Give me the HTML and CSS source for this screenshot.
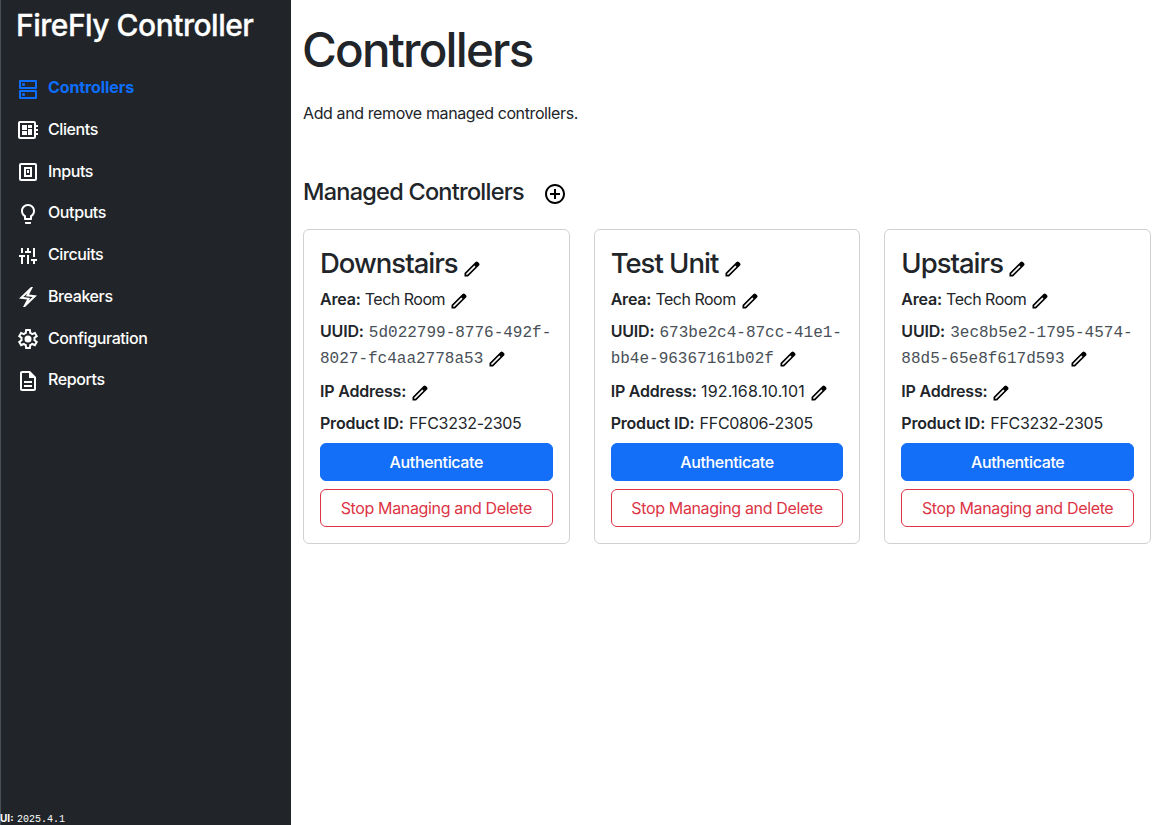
FILE: index.html
```html
<!DOCTYPE html>
<html lang="en">
<head>
<meta charset="utf-8">
<title>FireFly Controller</title>
<link rel="stylesheet" href="styles.css">
</head>
<body>
<svg class="sprite" aria-hidden="true">
  <symbol id="edit" viewBox="0 -960 960 960"><path d="M200-200h57l391-391-57-57-391 391v57Zm-80 80v-170l528-527q12-11 26.500-17t30.500-6q16 0 31 6t26 18l55 56q12 11 17.500 26t5.500 30q0 16-5.500 30.500T817-647L290-120H120Z"/></symbol>
</svg>
<div class="app">
  <aside class="sidebar">
    <div class="brand">FireFly Controller</div>
    <nav class="nav">
      <a class="nav-item active"><svg class="icon" viewBox="0 0 24 24"><path fill-rule="evenodd" d="M4 3h16a1 1 0 0 1 1 1v7a1 1 0 0 1-1 1H4a1 1 0 0 1-1-1V4a1 1 0 0 1 1-1zm1 2v5h14V5zM4 13h16a1 1 0 0 1 1 1v7a1 1 0 0 1-1 1H4a1 1 0 0 1-1-1v-7a1 1 0 0 1 1-1zm1 2v5h14v-5z"/><circle cx="7.500" cy="7.500" r="1.600"/><circle cx="7.500" cy="17.500" r="1.600"/></svg><span>Controllers</span></a>
      <a class="nav-item"><svg class="icon" viewBox="0 0 24 24"><path d="M22 9V7h-2V5c0-1.100-.9-2-2-2H4c-1.100 0-2 .9-2 2v14c0 1.100.9 2 2 2h14c1.100 0 2-.9 2-2v-2h2v-2h-2v-2h2v-2h-2V9h2zm-4 10H4V5h14v14zM6 13h5v4H6zm6-6h4v3h-4zM6 7h5v5H6zm6 4h4v6h-4z"/></svg><span>Clients</span></a>
      <a class="nav-item"><svg class="icon" viewBox="0 0 24 24"><path fill-rule="evenodd" d="M5 3h14a2 2 0 0 1 2 2v14a2 2 0 0 1-2 2H5a2 2 0 0 1-2-2V5a2 2 0 0 1 2-2zm0 2v14h14V5zM8 7h8v10H8zm2 2v6h4V9zM11 10h2v3h-2z"/></svg><span>Inputs</span></a>
      <a class="nav-item"><svg class="icon" viewBox="0 0 24 24"><path d="M9 21c0 .55.45 1 1 1h4c.55 0 1-.45 1-1v-1H9v1zm3-19C8.140 2 5 5.140 5 9c0 2.380 1.190 4.470 3 5.740V17c0 .55.45 1 1 1h6c.55 0 1-.45 1-1v-2.260c1.810-1.270 3-3.360 3-5.740 0-3.860-3.140-7-7-7zm2.850 11.100l-.85.6V16h-4v-2.300l-.85-.6C7.800 12.160 7 10.630 7 9c0-2.760 2.240-5 5-5s5 2.240 5 5c0 1.630-.8 3.160-2.150 4.100z"/></svg><span>Outputs</span></a>
      <a class="nav-item"><svg class="icon" viewBox="0 0 24 24"><path d="M5 20v-7H3v-2h6v2H7v7zm0-11V4h2v5zm4 0V7h2V4h2v3h2v2zm2 11v-9h2v9zm6 0v-3h-2v-2h6v2h-2v3zm0-7V4h2v9z"/></svg><span>Circuits</span></a>
      <a class="nav-item"><svg class="icon" viewBox="0 -960 960 960"><path d="m280-80 160-300-320-40 480-460h80L520-580l320 40L360-80h-80Zm222-247 161-151-269-34 63-117-160 151 268 34-63 117Z"/></svg><span>Breakers</span></a>
      <a class="nav-item"><svg class="icon" viewBox="0 -960 960 960"><path d="m370-80-16-128q-13-5-24.500-12T307-235l-119 50L78-375l103-78q-1-7-1-13.500v-27q0-6.500 1-13.500L78-585l110-190 119 50q11-8 23-15t24-12l16-128h220l16 128q13 5 24.500 12t22.500 15l119-50 110 190-103 78q1 7 1 13.500v27q0 6.500-2 13.500l103 78-110 190-118-50q-11 8-23 15t-24 12L590-80H370Zm70-80h79l14-106q31-8 57.500-23.500T639-327l99 41 39-68-86-65q5-14 7-29.500t2-31.500q0-16-2-31.500t-7-29.500l86-65-39-68-99 42q-22-23-48.500-38.500T533-694l-13-106h-79l-14 106q-31 8-57.500 23.500T321-633l-99-41-39 68 86 64q-5 15-7 30t-2 32q0 16 2 31t7 30l-86 65 39 68 99-42q22 23 48.500 38.500T427-266l13 106Z"/><circle cx="480" cy="-480" r="140"/></svg><span>Configuration</span></a>
      <a class="nav-item"><svg class="icon" viewBox="0 0 24 24"><path d="M8 16h8v2H8zm0-4h8v2H8zm6-10H6c-1.100 0-2 .9-2 2v16c0 1.100.89 2 1.990 2H18c1.100 0 2-.9 2-2V8l-6-6zm4 18H6V4h7v5h5v11z"/></svg><span>Reports</span></a>
    </nav>
    <footer class="version"><b>UI:</b> <code>2025.4.1</code></footer>
  </aside>
  <main class="main">
    <h1 class="title">Controllers</h1>
    <p class="lead">Add and remove managed controllers.</p>
    <div class="section-head">
      <h2 class="section-title">Managed Controllers</h2>
      <svg class="icon add" viewBox="0 0 24 24"><path d="M13 7h-2v4H7v2h4v4h2v-4h4v-2h-4V7zm-1-5C6.480 2 2 6.480 2 12s4.480 10 10 10 10-4.480 10-10S17.520 2 12 2zm0 18c-4.410 0-8-3.590-8-8s3.590-8 8-8 8 3.590 8 8-3.590 8-8 8z"/></svg>
    </div>
    <div class="cards">
      <article class="card">
        <h3 class="name"><span>Downstairs</span><svg class="edit"><use href="#edit"/></svg></h3>
        <p class="field"><b>Area:</b> <span class="area">Tech Room</span><svg class="edit"><use href="#edit"/></svg></p>
        <p class="field uuid"><b>UUID:</b> <code>5d022799-8776-492f-<br>8027-fc4aa2778a53</code><svg class="edit"><use href="#edit"/></svg></p>
        <p class="field"><b>IP Address:</b><svg class="edit"><use href="#edit"/></svg></p>
        <p class="field"><b>Product ID:</b> <span class="product">FFC3232-2305</span></p>
        <button class="btn primary">Authenticate</button>
        <button class="btn danger">Stop Managing and Delete</button>
      </article>
      <article class="card">
        <h3 class="name"><span>Test Unit</span><svg class="edit"><use href="#edit"/></svg></h3>
        <p class="field"><b>Area:</b> <span class="area">Tech Room</span><svg class="edit"><use href="#edit"/></svg></p>
        <p class="field uuid"><b>UUID:</b> <code>673be2c4-87cc-41e1-<br>bb4e-96367161b02f</code><svg class="edit"><use href="#edit"/></svg></p>
        <p class="field"><b>IP Address:</b> <span class="ip">192.168.10.101</span><svg class="edit"><use href="#edit"/></svg></p>
        <p class="field"><b>Product ID:</b> <span class="product">FFC0806-2305</span></p>
        <button class="btn primary">Authenticate</button>
        <button class="btn danger">Stop Managing and Delete</button>
      </article>
      <article class="card">
        <h3 class="name"><span>Upstairs</span><svg class="edit"><use href="#edit"/></svg></h3>
        <p class="field"><b>Area:</b> <span class="area">Tech Room</span><svg class="edit"><use href="#edit"/></svg></p>
        <p class="field uuid"><b>UUID:</b> <code>3ec8b5e2-1795-4574-<br>88d5-65e8f617d593</code><svg class="edit"><use href="#edit"/></svg></p>
        <p class="field"><b>IP Address:</b><svg class="edit"><use href="#edit"/></svg></p>
        <p class="field"><b>Product ID:</b> <span class="product">FFC3232-2305</span></p>
        <button class="btn primary">Authenticate</button>
        <button class="btn danger">Stop Managing and Delete</button>
      </article>
    </div>
  </main>
</div>
</body>
</html>
```
FILE: styles.css
```css
* { box-sizing: border-box; }
body {
  margin: 0;
  font: 400 16px/24px Inter, "Liberation Sans", sans-serif;
  letter-spacing: -0.3px;
  color: #212529;
  background: #fff;
}
h1, h2, h3, p { margin: 0; }
h1, h2, h3 { font-weight: 500; }
b { font-weight: 600; letter-spacing: -0.2px; }
code { font-family: "Liberation Mono", monospace; letter-spacing: 0; line-height: 1; }
.sprite { display: none; }
.app { display: flex; height: 825px; overflow: hidden; }
.sidebar {
  width: 291px;
  flex: none;
  display: flex;
  flex-direction: column;
  background: #212529;
  border-left: 1px solid #495057;
  color: #fff;
}
.brand {
  padding: 4px 0 0 15px;
  font-size: 30px;
  line-height: 42px;
  font-weight: 500;
  letter-spacing: -0.500px;
  -webkit-text-stroke: 0.3px currentColor;
}
.nav { display: flex; flex-direction: column; padding: 20.200px 0 0 15px; }
.nav-item { display: flex; align-items: center; gap: 8px; height: 41.750px; }
.nav-item span { font-weight: 500; letter-spacing: -0.400px; }
.nav-item.active { color: #0d6efd; }
.nav-item.active span { font-weight: 700; letter-spacing: -0.1px; }
.icon { width: 24px; height: 24px; flex: none; fill: currentColor; }
.nav-item .icon { margin-top: 3px; }
.version { margin: auto 0 0 -1px; font-size: 10px; line-height: 14px; white-space: nowrap; }
.version b { font-weight: 700; letter-spacing: 0; margin-right: 1px; }
.version code { font-size: 10px; }
.main { flex: 1; min-width: 0; padding: 21px 9px 0 12px; }
.title { font-size: 47.500px; line-height: 58px; letter-spacing: -1.800px; margin-left: -1px; }
.lead { margin-top: 22px; letter-spacing: -0.390px; }
.section-head { display: flex; align-items: center; gap: 19px; margin-top: 51px; height: 30px; }
.section-title { font-size: 23.500px; line-height: 29px; letter-spacing: -0.750px; }
.add { color: #000; margin-top: 5px; }
.cards { display: grid; grid-template-columns: repeat(3, minmax(0, 1fr)); gap: 24px; margin-top: 23px; }
.card {
  display: flex;
  flex-direction: column;
  gap: 8px;
  height: 315px;
  padding: 16px;
  border: 1px solid #d0d1d2;
  border-radius: 6px;
}
.name { height: 33px; font-size: 27.500px; line-height: 35px; letter-spacing: -1px; white-space: nowrap; }
.name .edit { margin-left: 4.500px; }
.field { height: 24px; line-height: 24px; white-space: nowrap; }
.uuid { height: 53.500px; line-height: 26.500px; margin-top: -1.500px; }
.uuid code { color: #495057; }
.uuid b { margin-right: 1px; }
.area { letter-spacing: -0.500px; }
.product { margin-left: 1px; }
.ip { letter-spacing: 0.200px; }
.edit { width: 20px; height: 20px; margin: -8px 0 -8px 4px; vertical-align: 2px; fill: #000; display: inline-block; }
.btn {
  height: 38px;
  flex: none;
  padding: 0;
  border: 1px solid #0d6efd;
  border-radius: 6px;
  font: inherit;
  letter-spacing: -0.350px;
}
.primary { background: #146ff8; border-color: #146ff8; color: #fff; font-weight: 500; }
.danger { background: #fff; border-color: #dc3545; color: #dc3545; }
```
